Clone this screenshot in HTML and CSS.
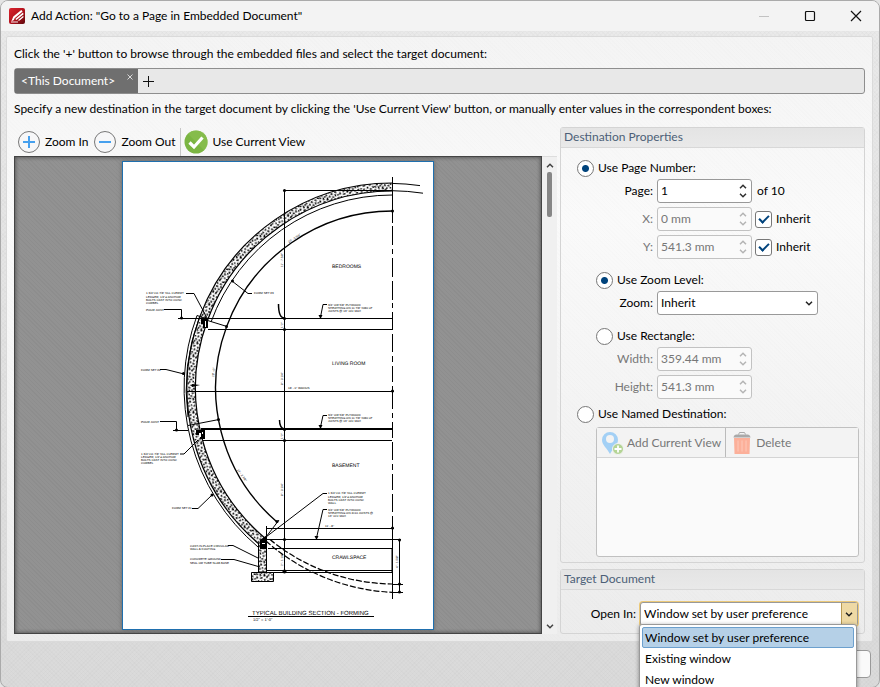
FILE: index.html
```html
<!DOCTYPE html>
<html lang="en">
<head>
<meta charset="utf-8">
<title>Add Action</title>
<link rel="stylesheet" href="styles.css">
</head>
<body>
<svg class="defs" width="0" height="0" aria-hidden="true">
  <symbol id="up" viewBox="0 0 8 5"><path d="M1 4.2 4 1.2 7 4.2" fill="none" stroke="currentColor" stroke-width="1.5"/></symbol>
  <symbol id="down" viewBox="0 0 8 5"><path d="M1 .8 4 3.8 7 .8" fill="none" stroke="currentColor" stroke-width="1.5"/></symbol>
</svg>
<div class="window">
  <header class="titlebar">
    <svg class="app-icon" viewBox="0 0 16 16" aria-hidden="true">
      <defs><linearGradient id="red" x1="0" y1="0" x2="1" y2="1"><stop offset="0" stop-color="#d9252f"/><stop offset=".5" stop-color="#b5121d"/><stop offset="1" stop-color="#5e070c"/></linearGradient></defs>
      <rect width="16" height="16" rx="2" fill="url(#red)"/>
      <path d="M2.400 13.200 4.300 8.600 12.300 2 13.600 3.600 5.600 10.200 5 12ZM6.300 10.900 14 4.600 14.600 6.200 7.400 12ZM8.600 12.400 14.300 7.800 14.500 9.200 10.600 12.400Z" fill="#fff"/>
      <path d="M2 14h7" stroke="#fff" stroke-width=".9"/>
    </svg>
    <h1>Add Action: "Go to a Page in Embedded Document"</h1>
    <div class="captions">
      <button type="button" class="cap" disabled><svg viewBox="0 0 12 12"><path d="M1 6.500H11" stroke="#c2c2c2"/></svg></button>
      <button type="button" class="cap"><svg viewBox="0 0 12 12"><rect x="1.500" y="1.500" width="9" height="9" rx="1" fill="none" stroke="#111" stroke-width="1.200"/></svg></button>
      <button type="button" class="cap"><svg viewBox="0 0 12 12"><path d="M1 1 11 11M11 1 1 11" stroke="#111" stroke-width="1.200"/></svg></button>
    </div>
  </header>

  <main class="panel">
    <p class="hint">Click the '+' button to browse through the embedded files and select the target document:</p>
    <div class="tabs">
      <div class="tab"><span>&lt;This Document&gt;</span><button type="button" class="tab-close"><svg viewBox="0 0 6 6"><path d="M.5.5 5.500 5.500M5.500.5.5 5.500" stroke="#d8d8d8"/></svg></button></div>
      <button type="button" class="tab-add"><svg viewBox="0 0 12 12"><path d="M6.500 1V12M1 6.500H12" stroke="#111"/></svg></button>
    </div>
    <p class="hint">Specify a new destination in the target document by clicking the 'Use Current View' button, or manually enter values in the correspondent boxes:</p>

    <div class="columns">
      <section class="preview">
        <div class="toolbar">
          <button type="button" class="tool"><svg viewBox="0 0 24 24"><circle cx="12" cy="12" r="10.500" fill="#f7f7f8" stroke="#777"/><path d="M12 6v12M6 12h12" stroke="#46a0ee" stroke-width="2"/></svg>Zoom In</button>
          <button type="button" class="tool"><svg viewBox="0 0 24 24"><circle cx="12" cy="12" r="10.500" fill="#f7f7f8" stroke="#777"/><path d="M6 12h12" stroke="#46a0ee" stroke-width="2"/></svg>Zoom Out</button>
          <button type="button" class="tool sep"><svg viewBox="0 0 24 24"><circle cx="12" cy="12" r="11.500" fill="#7bb542"/><path d="M12 .5a11.500 11.500 0 0 1 8 19.800L4 3.800A11.500 11.500 0 0 1 12 .5Z" fill="#8cc152" opacity=".6"/><path d="M5.500 12.500 10 17 18.500 7.500" fill="none" stroke="#fff" stroke-width="3.200"/></svg>Use Current View</button>
        </div>
        <div class="viewer">
          <div class="canvas">
            <svg class="sheet" viewBox="122 161 312 469" role="img">
              <defs>
                <pattern id="concrete" width="11" height="9" patternUnits="userSpaceOnUse" patternTransform="rotate(17) scale(1.500)">
                  <rect width="11" height="9" fill="#fff"/>
                  <path d="M0 1h1.500M2.500 0l1 1.500M5 .5h1.500M8 0l-.5 1.500M9.500 1.500h1.500M1 2.500l1 1M3.500 3l1.500-.8M6.500 2.500l.8 1M8.500 3.200h1.500M0 4.500l1-.5M2.500 5h1M5 4.200v1.300M6.500 5l1.500.3M9.500 4.500l.8 1.200M1 6.500l1-.8M3.500 6.800l1.200.3M6.200 6.500l.6 1.200M8.200 7l1.200-.6M10.500 7v1M.5 8.200h1.300M3 8.500l1-.5M5 8.600h1M7.800 8.500l1-.2" stroke="#000" stroke-width="1" fill="none"/>
                </pattern>
              </defs>
              <rect x="122.500" y="161.500" width="311" height="468" fill="#fff" stroke="#1f6fae"/>
              <g fill="none" stroke="#000">
                <path d="M392.500 187A201 201 0 0 0 263 541.700" stroke="url(#concrete)" stroke-width="8"/>
                <path d="M392.500 183A205 205 0 0 0 259 544M392.500 191A197 197 0 0 0 266 539" stroke-width="1.200"/>
                <path d="M392.500 195A193 193 0 0 0 211 322" />
                <path d="M197 315.500A208.500 208.500 0 0 0 258 547M199.500 317A206.500 206.500 0 0 0 188 417" />
                <path d="M197 315.500l9 3M258 547l8-6"/>
                <path d="M392.500 211A177 177 0 0 0 277 522" stroke-width="1.400"/>
                <path d="M392 183.400q14 .2 28 2.200M392 190.700q16 .2 31 2.500"/>
                <path d="M266 541A204 204 0 0 0 392 592.300M270 539.500A196 196 0 0 0 392 584" stroke-dasharray="6 2" stroke-width="1.200"/>
                <path d="M392.500 177V223M392.500 226V245M392.500 249V254M392.500 258V277M392.500 281V300M392.500 303V308M392.500 312V330M392.500 334V352M392.500 356V362M392.500 366V382M392.500 386V409M392.500 413V418M392.500 422V438M392.500 442V460M392.500 464V470M392.500 474V490M392.500 494V512M392.500 516V599"/>
                <path d="M178 318.500H392M208 329.500H392M187 391.500H394M203 440.500H392M266 528.500H394M263 539.500H401M268 548.500H392V571M266 570.500H392V572.500H266M284 190.500H392M284.500 190V572M399.500 540V592M393 584.500H403M393 592.500H403M266.500 526V572"/>
                <path d="M173 430.500H188"/>
                <path d="M201 429H392" stroke-width="2"/>
              </g>
              <path d="M258.500 543h8v29h-8zM251.500 572.500h22v9h-22z" fill="url(#concrete)" stroke="#000"/>
              <g fill="#000">
                <path d="M201 319h7v9h-5v-4h-2zM196 430h9v9h-5v-4h-4zM260 540l7-5v14h-7z"/>
                <path d="M205 321h1v6h-1zM199 433h2v4h-2zM202 432h1v2h-1zM262 543h3v1h-3z" fill="#fff"/>
                <circle cx="284.500" cy="190.500" r="1.500"/><circle cx="284.500" cy="318.500" r="1.500"/><circle cx="284.500" cy="329.500" r="1.500"/><circle cx="284.500" cy="429.500" r="1.500"/><circle cx="284.500" cy="440.500" r="1.500"/><circle cx="284.500" cy="539.500" r="1.500"/><circle cx="284.500" cy="571.500" r="2"/>
                <circle cx="392.500" cy="211" r="1.500"/><circle cx="392.500" cy="391" r="1.500"/><circle cx="392.500" cy="528" r="1.500"/><circle cx="399.500" cy="540" r="1.500"/><circle cx="399.500" cy="584" r="1.500"/><circle cx="399.500" cy="592" r="1.500"/><circle cx="226.500" cy="326.500" r="1.500"/><circle cx="218.500" cy="419.500" r="1.500"/><circle cx="277" cy="521.500" r="1.500"/><circle cx="232.500" cy="281" r="1.500"/><circle cx="183.500" cy="373.500" r="1.500"/><circle cx="212" cy="495" r="1.500"/><circle cx="181.500" cy="318" r="1.500"/><circle cx="176.500" cy="430" r="1.500"/>
                <path d="M318.500 315h4l-2 4zM318.500 425h4l-2 4zM314.500 536h4l-2 4zM192 384l8 1-8 2z"/>
              </g>
              <g fill="none" stroke="#000">
                <path d="M186 293.500H194L207 318M164 309.500H181.500V318M248 293.500H252M248 293.500L232 281M160 369.500H166L184 374M160 421.500H176.500V430M180 454H184L198 440M192 508.500H198L212 495M228 545.500H233L258 558M221 559.500H234L260 567M188 425.500L219 419.500M206 320L227 326.500M266 537L323 493.500H327M266 537L279 520M327 509.500H323L316.500 538M327 304.500H323L320.500 317M327 415.500H323L320.500 427"/>
                <path d="M278.500 304q0 14 6 14M279.500 420q0 8 5 9" stroke-width="1.500"/>
              </g>
              <g class="room"><text x="332" y="268">BEDROOMS</text><text x="332" y="365">LIVING ROOM</text><text x="332" y="467">BASEMENT</text><text x="332" y="559">CRAWLSPACE</text></g>
              <g class="tiny">
                <text x="146" y="294">1 3/4"x11 7/8" NLL CLERMT</text><text x="146" y="298">LEDGER, 1/2"ø ANCHOR</text><text x="146" y="301">BOLTS CAST INTO CONC</text><text x="146" y="304">CORBEL</text>
                <text x="146" y="311">POUR JOINT</text><text x="254" y="294">FORM SET #3</text><text x="141" y="371">FORM SET #2</text><text x="141" y="423">POUR JOINT</text>
                <text x="141" y="455">1 3/4"x11 7/8" NLL CLERMT</text><text x="141" y="458">LEDGER, 1/2"ø ANCHOR</text><text x="141" y="461">BOLTS CAST INTO CONC</text><text x="141" y="464">CORBEL</text>
                <text x="172" y="509">FORM SET #1</text>
                <text x="190" y="547">CAST-IN-PLACE CIRCULAR</text><text x="190" y="550">WALL &amp; FOOTING</text>
                <text x="190" y="560">CONCRETE GROUND</text><text x="190" y="564">SEAL OR TUBE SLAB BASE</text>
                <text x="328" y="306">3/4" OR 5/8" PLYWOOD</text><text x="328" y="309">SHEATHING ON 11 7/8" NI80 LP</text><text x="328" y="312">JOISTS @ 16" O/C MAX</text>
                <text x="328" y="416">3/4" OR 5/8" PLYWOOD</text><text x="328" y="419">SHEATHING ON 11 7/8" NI80 LP</text><text x="328" y="422">JOISTS @ 16" O/C MAX</text>
                <text x="328" y="494">1 3/4"x11 7/8" NLL CLERMT</text><text x="328" y="498">LEDGER, 1/2"ø ANCHOR</text><text x="328" y="501">BOLTS CAST INTO CONC</text><text x="328" y="504">WALL</text>
                <text x="328" y="511">3/4" OR 5/8" PLYWOOD</text><text x="328" y="514">SHEATHING ON 2x10 JOISTS @</text><text x="328" y="517">16" O/C MAX</text>
                <text x="288" y="389">18' - 0" RADIUS</text><text x="325" y="527">11' - 8"</text>
                <text transform="translate(283 267) rotate(-90)">11' - 7 5/8"</text><text transform="translate(283 385) rotate(-90)">8' - 3 1/4"</text><text transform="translate(283 496) rotate(-90)">8' - 3 1/4"</text><text transform="translate(283 328) rotate(-90)">1' 2"</text><text transform="translate(283 439) rotate(-90)">1' 2"</text><text transform="translate(283 566) rotate(-90)">2' - 1 1/8"</text><text transform="translate(398 568) rotate(-90)">4' - 1 5/8"</text>
                <text transform="translate(289 243) rotate(-33)">20' - 5 5/8"</text><text transform="translate(214 377) rotate(-84)">18' - 0"</text><text transform="translate(237 470) rotate(54)">14' - 2 7/8"</text>
              </g>
              <text class="caption" x="252" y="615">TYPICAL BUILDING SECTION - FORMING</text>
              <path d="M248 616.500H374" stroke="#000"/>
              <text class="scale" x="253" y="621">1/2" = 1'-0"</text>
            </svg>
          </div>
          <div class="scrollbar"><svg class="chev"><use href="#up"/></svg><div class="track"><div class="thumb"></div></div><svg class="chev"><use href="#down"/></svg></div>
        </div>
      </section>

      <div class="settings">
        <section class="group grow">
          <h2>Destination Properties</h2>
          <div class="group-body">
            <label class="radio"><input type="radio" name="mode" checked>Use Page Number:</label>
            <div class="fields">
              <label for="page">Page:</label>
              <span class="spin"><input id="page" type="text" value="1"><span class="arrows"><svg><use href="#up"/></svg><svg><use href="#down"/></svg></span></span>
              <span class="after">of 10</span>
              <label for="x" class="off">X:</label>
              <span class="spin off"><input id="x" type="text" value="0 mm" disabled><span class="arrows"><svg><use href="#up"/></svg><svg><use href="#down"/></svg></span></span>
              <label class="check"><input type="checkbox" checked>Inherit</label>
              <label for="y" class="off">Y:</label>
              <span class="spin off"><input id="y" type="text" value="541.3 mm" disabled><span class="arrows"><svg><use href="#up"/></svg><svg><use href="#down"/></svg></span></span>
              <label class="check"><input type="checkbox" checked>Inherit</label>
            </div>
            <label class="radio nested"><input type="radio" name="view" checked>Use Zoom Level:</label>
            <div class="fields">
              <label for="zoom">Zoom:</label>
              <span class="combo"><select id="zoom"><option>Inherit</option></select><svg><use href="#down"/></svg></span>
            </div>
            <label class="radio nested"><input type="radio" name="view">Use Rectangle:</label>
            <div class="fields">
              <label for="w" class="off">Width:</label>
              <span class="spin off"><input id="w" type="text" value="359.44 mm" disabled><span class="arrows"><svg><use href="#up"/></svg><svg><use href="#down"/></svg></span></span>
              <label for="h" class="off">Height:</label>
              <span class="spin off"><input id="h" type="text" value="541.3 mm" disabled><span class="arrows"><svg><use href="#up"/></svg><svg><use href="#down"/></svg></span></span>
            </div>
            <label class="radio named"><input type="radio" name="mode">Use Named Destination:</label>
            <div class="list">
              <div class="list-bar">
                <button type="button" disabled><svg viewBox="0 0 24 24"><path d="M9 1a8 8 0 0 1 8 8c0 5-5 8-8 14C6 17 1 14 1 9a8 8 0 0 1 8-8Z" fill="#a3d0f5"/><circle cx="9" cy="8" r="4" fill="#f3f3f3"/><circle cx="17" cy="18" r="5.500" fill="#b4d495" stroke="#f3f3f3"/><path d="M17 14.500v7M13.500 18h7" stroke="#fff" stroke-width="1.800"/></svg>Add Current View</button>
                <button type="button" disabled><svg viewBox="0 0 24 24"><path d="M4 7h16l-.5 16h-15Z" fill="#fcb09a"/><path d="M8 9.500v11M12 9.500v11M16 9.500v11" stroke="#fdc9ba"/><path d="M3.500 6.500q.5-3 3-3h11q2.500 0 3 3Z" fill="#a9a9a9"/><path d="M8.500 3.500l1-2h5l1 2" fill="none" stroke="#a9a9a9"/></svg>Delete</button>
              </div>
            </div>
          </div>
        </section>
        <section class="group">
          <h2>Target Document</h2>
          <div class="target">
            <label for="open">Open In:</label>
            <div class="combo hot"><select id="open"><option>Window set by user preference</option></select><svg><use href="#down"/></svg>
              <ul class="menu" role="listbox"><li class="sel" role="option">Window set by user preference</li><li role="option">Existing window</li><li role="option">New window</li></ul>
            </div>
          </div>
        </section>
      </div>
    </div>
  </main>
  <footer class="footer"><button type="button" class="action"></button></footer>
</div>
</body>
</html>
```
FILE: styles.css
```css
* { box-sizing: border-box; }
body { margin: 0; overflow: hidden; background: #e4e4e4; color: #000; font: 12px/16px Lato, "Open Sans", sans-serif; }
button, input, select { font: inherit; color: inherit; margin: 0; padding: 0; border: 0; background: none; }
h1, h2, p, ul { margin: 0; padding: 0; font: inherit; }
svg { flex: none; }
.defs { position: absolute; }

.window {
  min-height: 100vh; display: flex; flex-direction: column; overflow: hidden;
  border: 1px solid #aaa; border-radius: 8px;
  background:
    repeating-linear-gradient(45deg, rgba(0,0,0,.014) 0 1px, transparent 1px 3px),
    repeating-linear-gradient(-45deg, rgba(0,0,0,.014) 0 1px, transparent 1px 3px),
    linear-gradient(#eaeaea, #dadada);
}
.titlebar { height: 30px; display: flex; align-items: center; gap: 6px; padding-left: 8px; background: #f3f3f3; }
.app-icon { width: 16px; height: 16px; }
.captions { margin-left: auto; display: flex; }
.cap { width: 46px; height: 28px; display: grid; place-items: center; }
.cap svg { width: 12px; height: 12px; }

.panel {
  flex: 1; display: flex; flex-direction: column;
  margin: 5px 6px 0 5px; padding: 9px 7px 7px;
  border: 1px solid #dadada; border-radius: 2px;
  background:
    repeating-linear-gradient(45deg, rgba(0,0,0,.008) 0 1px, transparent 1px 3px),
    linear-gradient(#f4f4f4, #fafafa 30%, #ececec);
}
.hint { white-space: nowrap; }
.tabs {
  display: flex; align-items: stretch; height: 26px; margin: 6px 0 7px;
  border: 1px solid #8e8e8e; border-radius: 3px; background: #e8e8e8;
}
.tab { display: flex; align-items: center; justify-content: space-between; min-width: 123px; gap: 10px; padding: 0 5px 0 6px; background: #6f6f6f; color: #fff; }
.tab-close { align-self: flex-start; padding: 5px 0; line-height: 0; }
.tab-close svg { width: 6px; height: 6px; }
.tab-add { padding: 0 4px; line-height: 0; }
.tab-add svg { width: 12px; height: 12px; }

.columns { flex: 1; display: flex; gap: 3px; margin-top: 10px; }
.preview { flex: 1; display: flex; flex-direction: column; }
.toolbar { display: flex; align-items: center; height: 29px; padding-left: 3px; }
.tool { display: flex; align-items: center; gap: 4px; height: 28px; padding-right: 5px; }
.tool svg { width: 24px; height: 24px; }
.sep { border-left: 1px solid #c8c8c8; padding-left: 3px; }
.viewer { flex: 1; display: flex; }
.canvas {
  flex: 1; padding: 4px 0 3px; display: flex; justify-content: center; align-items: flex-start;
  border: 1px solid #444; box-shadow: inset 0 0 4px #444;
  background: repeating-linear-gradient(45deg, rgba(0,0,0,.03) 0 1px, transparent 1px 3px), #929292;
}
.sheet { width: 312px; height: 469px; display: block; box-shadow: 0 0 4px #666; }
.sheet text { font-family: "Liberation Sans", sans-serif; fill: #000; text-rendering: geometricPrecision; }
.room text { font-size: 5px; }
.tiny text { font-size: 3px; }
.sheet .caption { font-size: 6px; }
.sheet .scale { font-size: 4px; }
.scrollbar { width: 15px; display: flex; flex-direction: column; align-items: center; padding: 6px 0 5px; border-top: 1px solid #ddd; background: #f0f0f0; color: #444; }
.chev { width: 8px; height: 5px; }
.track { flex: 1; padding-top: 4px; }
.thumb { width: 5px; height: 45px; border-radius: 2px; background: #868686; }

.settings { width: 305px; display: flex; flex-direction: column; gap: 6px; }
.group { border: 1px solid #d4d4d4; border-radius: 3px; }
.grow { flex: 1; display: flex; flex-direction: column; }
.group h2 { height: 20px; line-height: 18px; padding-left: 3px; border-bottom: 1px solid #d8d8d8; background: linear-gradient(#e4e4e4, #e9e9e9); color: #4c5f77; }
.group-body { flex: 1; display: flex; flex-direction: column; padding: 9px 5px 5px 16px; }
.radio { display: flex; align-items: center; gap: 4px; height: 22px; }
.radio input { appearance: none; width: 17px; height: 17px; border: 1px solid #777; border-radius: 50%; background: #fff; }
.radio input:checked { background: radial-gradient(circle, #00437c 0 3px, #fff 4px); }
.nested { margin: 10px 0 0 19px; }
.named { margin: 4px 0 2px; }
.fields { display: grid; grid-template-columns: 76px 95px 1fr; gap: 4px; align-items: center; }
.fields > label:not(.check) { grid-column: 1; text-align: right; }
.off { color: #777; }
.after { padding-left: 1px; }
.spin { display: flex; height: 24px; border: 1px solid #999; border-radius: 3px; background: #fff; }
.spin input { flex: 1; min-width: 0; padding-left: 3px; }
.spin.off { border-color: #c2c2c2; background: #fafafa; }
.arrows { width: 16px; display: flex; flex-direction: column; align-items: center; justify-content: space-between; padding: 4px 0; color: #333; }
.arrows svg { width: 8px; height: 5px; }
.off .arrows { color: #b5b5b5; }
.check { display: flex; align-items: center; gap: 4px; }
.check input { appearance: none; width: 17px; height: 17px; margin-left: -1px; border: 1px solid #777; border-radius: 3px; background: #fff; display: grid; place-items: center; }
.check input::before { content: ""; width: 8px; height: 4px; margin-bottom: 3px; border: solid #00437c; border-width: 0 0 2px 2px; transform: rotate(-45deg); }
.combo { grid-column: 2 / 4; position: relative; display: flex; align-items: center; width: 161px; height: 24px; border: 1px solid #999; border-radius: 3px; background: #fff; }
.combo select { appearance: none; width: 100%; height: 100%; padding-left: 3px; outline: 0; }
.combo > svg { width: 8px; height: 5px; position: absolute; right: 4px; pointer-events: none; color: #222; }
.list { flex: 1; margin-left: 19px; border: 1px solid #c0c0c0; border-radius: 3px; background: #fafafa; }
.list-bar { display: flex; height: 30px; border-bottom: 1px solid #d4d4d4; background: #f3f3f3; }
.list-bar button { display: flex; align-items: center; gap: 2px; padding: 0 4px; color: #777; }
.list-bar button + button { border-left: 1px solid #bbb; }
.list-bar svg { width: 24px; height: 24px; }
.target { display: flex; align-items: center; justify-content: flex-end; gap: 4px; padding: 12px 6px 7px; }
.hot { width: 218px; border-color: #999; box-shadow: 0 0 0 1px #ecc978; }
.hot::after { content: ""; order: 1; flex: none; width: 15px; height: 100%; border-left: 1px solid #b99a52; background: #eed9a4; }
.hot select { flex: 1; width: auto; }
.hot > svg { z-index: 1; }
.menu { position: absolute; top: 21px; left: -2px; width: 218px; height: 80px; padding: 2px; list-style: none; border: 1px solid #999; border-radius: 3px; background: #fff; box-shadow: 0 1px 4px rgba(0,0,0,.4); z-index: 2; }
.menu li { height: 21px; padding: 0 3px; line-height: 21px; }
.menu .sel { border: 1px solid #6ca0ce; border-radius: 2px; background: #b5d0e7; line-height: 19px; padding: 0 2px; }
.footer { height: 45px; display: flex; justify-content: flex-end; align-items: flex-start; padding: 8px 8px 0; }
.action { width: 84px; height: 28px; border: 1px solid #999; border-radius: 4px; background: #fafafa; }
```
